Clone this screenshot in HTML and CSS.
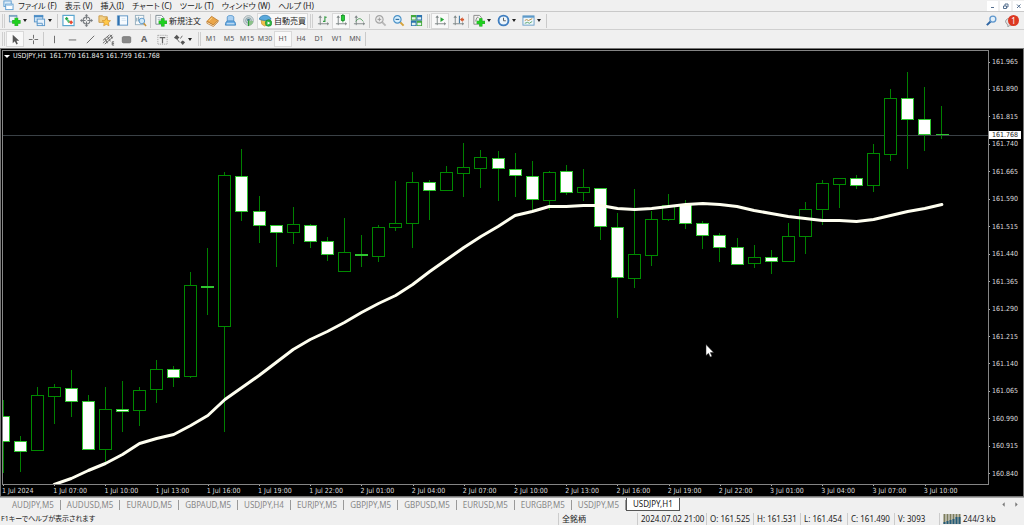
FILE: index.html
```html
<!DOCTYPE html>
<html lang="ja">
<head>
<meta charset="utf-8">
<title>USDJPY,H1</title>
<link rel="stylesheet" href="styles.css">
</head>
<body>
<div class="app">
  <nav class="menubar">
    <svg class="app-icon" viewBox="0 0 12 12"><rect x="1.500" y="1" width="8" height="6" fill="#dcecf8" stroke="#5b9bd0"/><rect x="3.500" y="4.500" width="8" height="6" fill="#fff" stroke="#5b9bd0"/><path d="M4 6h7" stroke="#a9cfeb"/></svg>
    <button>ファイル (F)</button><button>表示 (V)</button><button>挿入(I)</button><button>チャート (C)</button><button>ツール (T)</button><button>ウィンドウ (W)</button><button>ヘルプ (H)</button>
    <span class="window-buttons">
      <button aria-label="最小化"><svg viewBox="0 0 11 10"><path d="M4 6.500h3" stroke="#56708f"/></svg></button>
      <button aria-label="元に戻す"><svg viewBox="0 0 11 10"><path d="M5 5V3h3v3H7M3.500 5h3v2.500h-3z" stroke="#56708f" fill="none"/></svg></button>
      <button aria-label="閉じる"><svg viewBox="0 0 11 10"><path d="M4 3.500l3.500 3.500M7.500 3.500L4 7" stroke="#56708f"/></svg></button>
    </span>
  </nav>

  <div class="toolbar">
    <i class="grip"></i>
    <button class="tool drop" aria-label="新規チャート"><svg viewBox="0 0 14 14"><rect x="1.500" y="1.500" width="8" height="7" fill="#eef5fa" stroke="#739dbb"/><path d="M1 2.500h9" stroke="#739dbb"/><path d="M9 4v9M4.500 8.500h9" stroke="#35a435" stroke-width="4"/><path d="M9 4.300v8.400M4.800 8.500h8.400" stroke="#1fd01f" stroke-width="2.800"/></svg></button>
    <button class="tool drop" aria-label="プロファイル"><svg viewBox="0 0 14 14"><rect x="1.500" y="1.500" width="9" height="7" fill="#cfe4f6" stroke="#5b97c9"/><path d="M1 2.500h10" stroke="#4a8cc5" stroke-width="2"/><rect x="4.500" y="5.500" width="8" height="7" fill="#e6f1fb" stroke="#5b97c9"/><path d="M4 10h6v3" stroke="#5b97c9" fill="none"/></svg></button>
    <i class="sep"></i>
    <button class="tool" aria-label="気配値"><svg viewBox="0 0 14 14"><rect x="1" y="1.500" width="12" height="11" fill="#fff" stroke="#5ba7d0" stroke-width="1.300"/><path d="M3 5l2-2 2 2-2 2z" fill="#26a84a"/><path d="M5 7l2-1 2 2-2 2z" fill="#5bc275"/><path d="M7.500 9l2.300-2.300L12 9l-2.200 2.300z" fill="#e84a31"/></svg></button>
    <button class="tool" aria-label="データウィンドウ"><svg viewBox="0 0 14 14"><circle cx="7" cy="7" r="3.700" fill="none" stroke="#777b7f" stroke-width="1.200"/><path d="M7 1v5M7 8v5M1 7h5M8 7h5" stroke="#777b7f" stroke-width="1.200"/><path d="M7 0l2 2H5zM7 14l2-2H5zM0 7l2-2v4zM14 7l-2-2v4z" fill="#777b7f"/></svg></button>
    <button class="tool" aria-label="ナビゲーター"><svg viewBox="0 0 14 14"><path d="M1 2h4l1 1h4v6H1z" fill="#f2cf83" stroke="#c99a4c"/><path d="M9 4l1.300 2.800 3.200.4-2.300 2.200.6 3.300L9 11.200l-2.900 1.500.6-3.300-2.300-2.200 3.200-.4z" fill="#ffc94a" stroke="#d29029" stroke-width=".7"/></svg></button>
    <button class="tool" aria-label="ターミナル"><svg viewBox="0 0 14 14"><rect x="1.500" y="2" width="11" height="10" fill="#f7fbff" stroke="#5b93c4"/><path d="M3 2v10" stroke="#2e70b0" stroke-width="2"/><path d="M6 5h4M6 7h5" stroke="#c1d8ea" stroke-width=".6"/></svg></button>
    <button class="tool" aria-label="ストラテジーテスター"><svg viewBox="0 0 14 14"><rect x="1.500" y="1.500" width="9" height="10" fill="#f7f9fa" stroke="#96afbf"/><path d="M3 4v4M5 3v5M7 5v4" stroke="#7799ad"/><circle cx="8.500" cy="7.500" r="3" fill="#cfe8f8" stroke="#5b97c9"/><path d="M10.500 10l2.500 3" stroke="#c7923b" stroke-width="1.600"/></svg></button>
    <i class="sep"></i>
    <button class="tool text"><svg viewBox="0 0 14 14"><path d="M2 1.500h6l2 2V11H2z" fill="#f7f9fa" stroke="#7d8a93"/><path d="M4 4h3M4 6h4" stroke="#9baab3" stroke-width=".8"/><path d="M9.500 4.500v9M5 9h9" stroke="#35a435" stroke-width="3.800"/><path d="M9.500 4.800v8.400M5.300 9h8.400" stroke="#1fd01f" stroke-width="2.700"/></svg>新規注文</button>
    <button class="tool" aria-label="メタエディター"><svg viewBox="0 0 14 14"><path d="M1 8l5-5.500 7 4.500-5 5z" fill="#eaa64a" stroke="#b97527" stroke-width=".8"/><path d="M1 8v2l7 3.500 5-5V7l-5 5z" fill="#fff2d8" stroke="#b97527" stroke-width=".8"/><path d="M3 7.500L6.500 4" stroke="#ffdb94"/></svg></button>
    <button class="tool" aria-label="コミュニティ"><svg viewBox="0 0 14 14"><path d="M3.500 8V3.500C3.500 1 10.500 1 10.500 3.500V8z" fill="#a9d0f2" stroke="#4c8fc8" stroke-width=".9"/><path d="M1.500 12c0-3 1-4.500 3-4.500h5c2 0 3 1.500 3 4.500z" fill="#6fb0e6" stroke="#3279b8" stroke-width=".8"/><path d="M3 10.500h8" stroke="#dceaf6"/></svg></button>
    <button class="tool" aria-label="シグナル"><svg viewBox="0 0 14 14"><circle cx="7" cy="7" r="5.300" fill="#d4dcdd" stroke="#a5b1b5"/><circle cx="7" cy="7" r="3" fill="none" stroke="#849aa2"/><circle cx="7" cy="6.500" r="1.500" fill="#3e7789"/><path d="M7 7v5.500c3 0 5-2 5-5" fill="#8cc189"/><path d="M7 7v6" stroke="#2c9b37" stroke-width="1.200"/></svg></button>
    <button class="tool text on"><svg viewBox="0 0 14 14"><path d="M2 5h9l-1 6-4 2-3-2z" fill="#f0c14b" stroke="#c48b26" stroke-width=".7"/><path d="M0 5.500C2 0 11 0 13 5.500 9 7.500 4 7.500 0 5.500z" fill="#5aa9dc" stroke="#2c78b0" stroke-width=".8"/><circle cx="10.300" cy="9.800" r="3.500" fill="#2fb644" stroke="#168228" stroke-width=".6"/><path d="M9.200 8l3 1.800-3 1.800z" fill="#fff"/></svg>自動売買</button>
    <i class="grip"></i>
    <button class="tool" aria-label="バーチャート"><svg viewBox="0 0 14 14"><path d="M3.500 2v10M1 10.500h11" class="ax"/><path d="M1.500 4l2-2.500 2 2.500zM11 8.500l2 2-2 2z" class="axf"/><path d="M8.500 2.500v6M8.500 3.500h2M6.500 8h2" stroke="#339a42" stroke-width="1.200"/></svg></button>
    <button class="tool on" aria-label="ローソク足"><svg viewBox="0 0 14 14"><path d="M3.500 2v10M1 10.500h11" class="ax"/><path d="M1.500 4l2-2.500 2 2.500zM11 8.500l2 2-2 2z" class="axf"/><path d="M8.500 0v9" stroke="#108d20"/><rect x="6.800" y="1.500" width="3.400" height="5.500" fill="#25cd36" stroke="#108d20" stroke-width=".8"/></svg></button>
    <button class="tool" aria-label="ラインチャート"><svg viewBox="0 0 14 14"><path d="M3.500 2v10M1 10.500h11" class="ax"/><path d="M1.500 4l2-2.500 2 2.500zM11 8.500l2 2-2 2z" class="axf"/><path d="M3 8c3-4 5-4 8 0" stroke="#449750" fill="none"/></svg></button>
    <i class="sep"></i>
    <button class="tool" aria-label="拡大"><svg viewBox="0 0 14 14"><path d="M8.500 8.500l4 4" stroke="#b7b7b7" stroke-width="2"/><circle cx="5.800" cy="5.800" r="4" fill="#ececec" stroke="#a5a5a5" stroke-width="1.200"/><path d="M3.800 5.800h4M5.800 3.800v4" stroke="#999"/></svg></button>
    <button class="tool" aria-label="縮小"><svg viewBox="0 0 14 14"><path d="M8.500 8.500l4 4" stroke="#d5a23b" stroke-width="2.200"/><circle cx="5.800" cy="5.800" r="4" fill="#d8effd" stroke="#4a91c7" stroke-width="1.200"/><path d="M3.800 5.800h4" stroke="#276a9e" stroke-width="1.200"/></svg></button>
    <button class="tool" aria-label="整列"><svg viewBox="0 0 14 14"><path d="M1 1h6v6H1zM7 7h6v6H7z" fill="#43a83c"/><path d="M7 1h6v6H7zM1 7h6v6H1z" fill="#2d73ae"/><path d="M2 3.500h4V6H2zM8 3.500h4V6H8zM2 9.500h4V12H2zM8 9.500h4V12H8z" fill="#e4f2ee"/></svg></button>
    <i class="grip"></i>
    <button class="tool on" aria-label="自動スクロール"><svg viewBox="0 0 14 14"><path d="M3.500 2v10M1 10.500h11" class="ax"/><path d="M1.500 4l2-2.500 2 2.500zM11 8.500l2 2-2 2z" class="axf"/><path d="M7 3.500l4 2.500-4 2.500z" fill="#25a634"/></svg></button>
    <button class="tool" aria-label="チャートシフト"><svg viewBox="0 0 14 14"><path d="M3.500 2v10M1 10.500h11" class="ax"/><path d="M1.500 4l2-2.500 2 2.500zM11 8.500l2 2-2 2z" class="axf"/><path d="M8 2v8" stroke="#477ca5" stroke-width="1.200"/><path d="M8.500 6l3-2.500V5H13v2h-1.500v1.500z" fill="#d6562c"/></svg></button>
    <i class="sep"></i>
    <button class="tool drop" aria-label="インディケータ"><svg viewBox="0 0 14 14"><path d="M2 1.500h6l2 2V11H2z" fill="#f2f2f0" stroke="#888"/><path d="M4 8c1-5 2-5 3-4" stroke="#777" fill="none"/><path d="M9.500 4.500v9M5 9h9" stroke="#35a435" stroke-width="3.600"/><path d="M9.500 4.800v8.400M5.300 9h8.400" stroke="#1fd01f" stroke-width="2.600"/></svg></button>
    <button class="tool drop" aria-label="時間足設定"><svg viewBox="0 0 14 14"><circle cx="7" cy="7" r="5.300" fill="#eef6fc" stroke="#3f7ec0" stroke-width="2"/><path d="M7 4v3.300h2.500" stroke="#555" fill="none"/></svg></button>
    <button class="tool drop" aria-label="定型チャート"><svg viewBox="0 0 14 14"><rect x="1" y="2" width="12" height="10" fill="#eef6fb" stroke="#6a9fc7"/><path d="M1 3h12" stroke="#5d99c9" stroke-width="2"/><path d="M3 7l2-1 2 1 4-2" stroke="#b98b3d" fill="none"/><path d="M3 10l3-1 2 1 3-2" stroke="#55a36a" fill="none"/></svg></button>
    <i class="end"></i>
    <span class="right-tools">
      <button class="tool" aria-label="検索"><svg viewBox="0 0 14 14"><path d="M6 8l-4 4" stroke="#2f66a3" stroke-width="2.200"/><circle cx="8.500" cy="5.500" r="3.200" fill="#e3f0fa" stroke="#5f97cd" stroke-width="1.400"/></svg></button>
      <button class="tool chat" aria-label="メッセージ"><svg viewBox="0 0 14 14"><path d="M.500 8.500c0-3 3-4 5.500-4s5 1 5 4-3 4-5 4H5l-2 1.300V12z" fill="#e2e2e2" stroke="#9c9c9c"/></svg><b class="badge">1</b></button>
    </span>
  </div>

  <div class="toolbar second">
    <i class="grip"></i>
    <button class="tool on" aria-label="カーソル"><svg viewBox="0 0 14 14"><path d="M4 2v9l2.200-2L8 12.500l1.500-.8L8 8.300h3z" fill="#555"/></svg></button>
    <button class="tool" aria-label="十字カーソル"><svg viewBox="0 0 14 14"><path d="M7 2v4M7 8v4M2 7h4M8 7h4" class="ln"/></svg></button>
    <i class="sep"></i>
    <button class="tool" aria-label="垂直線"><svg viewBox="0 0 14 14"><path d="M7 3v8" class="ln"/></svg></button>
    <button class="tool" aria-label="水平線"><svg viewBox="0 0 14 14"><path d="M3 7.500h8" class="ln"/></svg></button>
    <button class="tool" aria-label="トレンドライン"><svg viewBox="0 0 14 14"><path d="M3 11l8-8" class="ln"/></svg></button>
    <button class="tool" aria-label="チャネル"><svg viewBox="0 0 14 14"><path d="M1 8l7-6M1 11l10-9M3 12l9-8M3 6l3 5M6 4l3 5M9 2l2 4" class="ln"/><path d="M13 9.500h-2v3.500h2M11 11.200h2" class="ln"/></svg></button>
    <button class="tool" aria-label="四角形"><svg viewBox="0 0 14 14"><rect x="2.500" y="4" width="9" height="6.500" rx="1" fill="#888" stroke="#777"/></svg></button>
    <button class="tool letter">A</button>
    <button class="tool" aria-label="ラベル"><svg viewBox="0 0 14 14"><rect x="2" y="2.500" width="10" height="9.500" fill="none" stroke="#999" stroke-dasharray="1 1"/><path d="M4 5h6M7 5v6" stroke="#666" stroke-width="1.300"/></svg></button>
    <button class="tool drop" aria-label="矢印"><svg viewBox="0 0 14 14"><path d="M1 5l3-3 3 3-3 2z" fill="#555"/><path d="M4 6l3 4M8 6l2-3" class="ln"/><path d="M8 10l2.500-2 2.500 2-2.500 3z" fill="#555"/></svg></button>
    <i class="grip"></i>
    <span class="periods"><button>M1</button><button>M5</button><button>M15</button><button>M30</button><button class="on">H1</button><button>H4</button><button>D1</button><button>W1</button><button>MN</button></span>
    <i class="end"></i>
  </div>

  <main class="chart">
    <div class="plot">
      <svg id="plot" viewBox="3 51 985 433" preserveAspectRatio="none"></svg>
      <p class="caption"><i class="caret"></i><span>USDJPY,H1</span><span>161.770 161.845 161.759 161.768</span></p>
    </div>
    <div class="prices" id="prices"></div>
    <div class="times" id="times"></div>
  </main>

  <nav class="tabs">
    <button>AUDJPY,M5</button><button>AUDUSD,M5</button><button>EURAUD,M5</button><button>GBPAUD,M5</button><button>USDJPY,H4</button><button>EURJPY,M5</button><button>GBPJPY,M5</button><button>GBPUSD,M5</button><button>EURUSD,M5</button><button>EURGBP,M5</button><button>USDJPY,M5</button><button class="active">USDJPY,H1</button>
    <span class="scroll"><button aria-label="前へ"><svg viewBox="0 0 6 6"><path d="M4 1v4L2 3z" fill="#777"/></svg></button><button aria-label="次へ"><svg viewBox="0 0 6 6"><path d="M2 1v4l2-2z" fill="#777"/></svg></button></span>
  </nav>

  <footer class="status">
    <span class="help">F1キーでヘルプが表示されます</span>
    <span class="profile">全銘柄</span>
    <span class="date">2024.07.02 21:00</span>
    <span>O: 161.525</span><span>H: 161.531</span><span>L: 161.454</span><span>C: 161.490</span><span class="volume">V: 3093</span>
    <span class="traffic"><svg viewBox="0 0 18 10"><path d="M1.500 0v10M4.500 0v10M7.500 0v10M10.500 0v10M13.500 0v10M16.500 0v10" stroke="#7c7d5c" stroke-width="2"/><path d="M1.500 8v2M4.500 7v3M7.500 6v4M10.500 5v5M13.500 3v7M16.500 3v7" stroke="#245b78" stroke-width="2"/></svg>244/3 kb</span>
  </footer>
</div>
<script src="chart.js"></script>
</body>
</html>
```
FILE: styles.css
```css
* { box-sizing: border-box; }
body { margin: 0; background: #f0f0f0; color: #222; font: 8px/10px "Noto Sans", "Noto Sans CJK JP", sans-serif; }
button { appearance: none; border: 0; margin: 0; padding: 0; background: none; color: inherit; font: inherit; white-space: nowrap; }
svg { display: block; flex: none; }
.app { display: flex; flex-direction: column; height: 100vh; overflow: hidden; }

.menubar { display: flex; align-items: center; gap: 8px; height: 12px; padding-left: 2px; border-bottom: 1px solid #c9c9c9; font-feature-settings: "palt"; }
.app-icon { width: 12px; height: 11px; margin-right: -4px; }
.window-buttons { display: flex; gap: 2px; margin-left: auto; }
.window-buttons button { background: #fff; }
.window-buttons svg { width: 11px; height: 10px; }

.toolbar { display: flex; align-items: center; height: 18px; border-bottom: 1px solid #d0d0d0; }
.toolbar.second { border-bottom: 0; }
.tool { position: relative; display: flex; align-items: center; justify-content: center; width: 18px; height: 16px; border: 1px solid transparent; }
.tool svg { width: 13px; height: 13px; }
.tool.on, .periods .on { background: #f9f9f9; border: 1px solid #d9d9d9; }
.tool.drop { width: 25px; justify-content: flex-start; padding-left: 1px; }
.tool.drop::after { content: ""; margin-left: 2px; border: 2px solid transparent; border-top: 3px solid #222; border-bottom: 0; }
.tool.text { width: auto; gap: 2px; padding: 0 1px; font: 8px/12px "Noto Sans CJK JP", sans-serif; }
.tool.letter { color: #666; font: bold 9px/12px "Noto Sans", sans-serif; }
.grip { width: 3px; height: 14px; margin: 0 1px 0 2px; border: solid #cfcfcf; border-width: 0 1px; flex: none; }
.sep, .end { width: 1px; height: 14px; margin: 0 1px; background: #cacaca; flex: none; }
.ax { stroke: #7f8787; fill: none; }
.axf { fill: #7f8787; }
.ln { stroke: #666; fill: none; }
.right-tools { display: flex; gap: 2px; margin-left: auto; padding-right: 4px; }
.badge { position: absolute; right: 0; top: 1px; width: 11px; height: 11px; border-radius: 50%; background: #dc3823; color: #fff; font: 8px/11px "Noto Sans", sans-serif; text-align: center; }
.periods { display: flex; }
.periods button { width: 18px; height: 16px; color: #555; font: 7px/14px "Noto Sans", sans-serif; border: 1px solid transparent; }

.chart { flex: 1; min-height: 0; display: grid; grid-template: 1fr 11px / 1fr 34px; background: #000; border: 1px solid #777; padding: 1px 0 0 1px; color: #ddd; font: 7px/10px "DejaVu Sans Condensed", "DejaVu Sans", sans-serif; }
.plot { position: relative; min-height: 0; border: 1px solid #858585; }
.plot svg { width: 100%; height: 100%; }
.caption { position: absolute; left: 1px; top: 0; display: flex; align-items: center; gap: 3px; margin: 0; color: #eee; white-space: nowrap; }
.caret { border: 3px solid transparent; border-top-color: #fff; border-bottom: 0; }
.prices { position: relative; display: flex; flex-direction: column; justify-content: space-between; padding: 7px 0 6px; }
.prices span { display: flex; align-items: center; gap: 2px; }
.prices span::before { content: ""; width: 1px; height: 1px; background: #aaa; }
.prices b { position: absolute; left: 0; right: 2px; margin-top: -4px; padding-left: 3px; background: #fff; color: #222; font-weight: normal; line-height: 8px; }
.times { grid-column: 1 / -1; display: flex; }
.times span { white-space: nowrap; }
.times span::before { content: ""; display: block; width: 1px; height: 1px; margin-left: 1px; background: #aaa; }
.up { fill: #000; stroke: #008a00; }
.down { fill: #fff; stroke: #2fc52f; }
.wick { stroke: #008000; }
.average { fill: none; stroke: #fffff0; stroke-width: 3; stroke-linejoin: round; stroke-linecap: round; }
.level { stroke: #3a4146; }
.crisp { shape-rendering: crispEdges; }

.tabs { display: flex; align-items: center; height: 14px; padding-left: 6px; color: #888; border-top: 1px solid #aaa; }
.tabs > button { padding: 0 6px; border-right: 1px solid #999; line-height: 10px; }
.tabs > .active { align-self: stretch; background: #fff; color: #222; border: 1px solid #555; border-top: 0; }
.scroll { display: flex; gap: 6px; margin-left: auto; padding-right: 4px; }
.scroll svg { width: 7px; height: 7px; }

.status { display: flex; align-items: center; height: 14px; padding: 2px 0 0 1px; }
.status span { flex: 0 0 47px; padding-left: 3px; border-left: 1px solid #ccc; white-space: nowrap; line-height: 12px; }
.status .help { flex: 1; border: 0; padding: 0; font-size: 7px; font-feature-settings: "palt"; }
.status .profile { flex-basis: 79px; }
.status .date { flex-basis: 69px; }
.status .volume { flex-basis: 45px; }
.status .traffic { flex-basis: 85px; display: flex; align-items: center; gap: 2px; }
.traffic svg { width: 18px; height: 10px; }
```
FILE: chart.js
```js
// Each candle: high, body top, body bottom, low, direction (1 = rising).
const candles = [
  [400,416,441,473,0],[436,441,451,472,0],[387,395,450,451,1],[384,387,396,424,1],[370,388,401,417,0],
  [395,401,449,450,0],[387,409,449,462,1],[381,409,411,432,0],[387,390,410,426,1],[360,369,389,403,1],
  [366,369,377,387,0],[272,285,376,378,1],[248,286,287,315,0],[172,175,326,432,1],[149,176,211,221,0],
  [196,211,225,243,0],[225,225,232,267,0],[207,224,232,244,1],[224,225,241,248,0],[237,241,254,261,0],
  [218,252,271,271,1],[235,254,255,267,0],[225,227,256,262,1],[181,223,227,231,1],[172,182,223,248,1],
  [180,182,190,220,0],[166,172,190,190,1],[143,167,173,197,1],[150,157,168,188,1],[151,158,168,201,0],
  [153,169,175,197,0],[161,176,199,210,0],[171,172,200,210,1],[165,171,192,195,0],[169,187,192,201,1],
  [188,188,226,240,0],[213,227,277,318,0],[189,254,278,288,1],[211,219,255,266,1],[194,205,219,221,1],
  [200,204,223,229,0],[221,223,235,249,0],[233,235,247,262,0],[238,247,264,265,0],[245,257,263,268,1],
  [250,257,261,274,0],[223,236,261,261,1],[202,209,236,254,1],[180,183,209,225,1],[178,178,184,208,1],
  [175,178,185,189,0],[144,153,185,192,1],[89,98,154,161,1],[72,98,119,169,0],[87,119,134,151,0],[106,134,134,139,0]
];
const average = [484,478,470,463,454,443,438,434,425,415,399,387,375,362,349,339,331,322,312,303,295,284,271,259,247,236,226,215,211,206,206,205,205,208,209,208,206,204,203,204,206,210,213,216,218,220,220,221,219,215,211,208,204];
const centre = i => 3 + i * 17.07;

let shapes = '<path class="level crisp" d="M2 135.500H989"/>';
candles.forEach(([high, top, bottom, low, up], i) => {
  const x = Math.floor(centre(i)) + 0.5;
  shapes += `<path class="wick crisp" d="M${x} ${high}V${low}"/>`;
  shapes += bottom > top
    ? `<rect class="${up ? 'up' : 'down'} crisp" x="${x - 6}" y="${top + 0.5}" width="12" height="${bottom - top}"/>`
    : `<path class="down crisp" d="M${x - 6} ${top + 0.5}h13"/>`;
});
shapes += `<polyline class="average" points="${average.map((y, i) => `${centre(i + 3)},${y + 0.5}`).join(' ')}"/>`;
shapes += '<path d="M706 344.500v11l2.500-2.200 1.700 3.700 1.800-.8-1.700-3.600h3.400z" fill="#fff" stroke="#222" stroke-width=".5"/>';
document.getElementById('plot').innerHTML = shapes;

let prices = '';
for (let p = 161965; p >= 160840; p -= 75) prices += `<span>${(p / 1000).toFixed(3)}</span>`;
document.getElementById('prices').innerHTML = prices + '<b style="top:19.600%">161.768</b>';

const times = ['1 Jul 2024', '1 Jul 07:00', '1 Jul 10:00', '1 Jul 13:00', '1 Jul 16:00', '1 Jul 19:00', '1 Jul 22:00', '2 Jul 01:00', '2 Jul 04:00', '2 Jul 07:00', '2 Jul 10:00', '2 Jul 13:00', '2 Jul 16:00', '2 Jul 19:00', '2 Jul 22:00', '3 Jul 01:00', '3 Jul 04:00', '3 Jul 07:00', '3 Jul 10:00'];
const step = 3 * 17.07 / 1021 * 100;
document.getElementById('times').innerHTML = times.map(t => `<span style="flex:0 0 ${step}%">${t}</span>`).join('');
```
